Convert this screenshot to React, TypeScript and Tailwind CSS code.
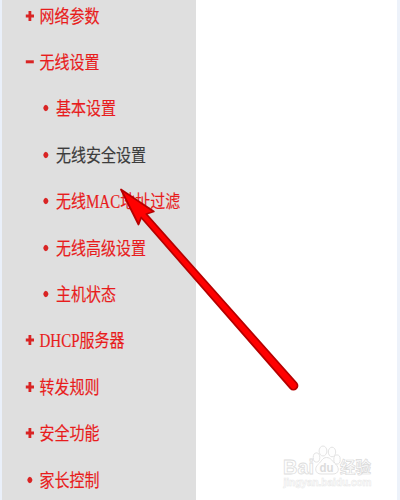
interface MenuItem {
  label: string;
  icon: 'plus' | 'minus' | 'dot';
  child?: boolean;
  active?: boolean;
}

const menuItems: MenuItem[] = [
  { label: '网络参数', icon: 'plus' },
  { label: '无线设置', icon: 'minus' },
  { label: '基本设置', icon: 'dot', child: true },
  { label: '无线安全设置', icon: 'dot', child: true, active: true },
  { label: '无线MAC地址过滤', icon: 'dot', child: true },
  { label: '无线高级设置', icon: 'dot', child: true },
  { label: '主机状态', icon: 'dot', child: true },
  { label: 'DHCP服务器', icon: 'plus' },
  { label: '转发规则', icon: 'plus' },
  { label: '安全功能', icon: 'plus' },
  { label: '家长控制', icon: 'dot' },
];

function Marker({ icon }: { icon: MenuItem['icon'] }) {
  return (
    <svg viewBox="0 0 10 12" className="-mt-0.5 h-3 w-2.5 shrink-0 fill-[#d92424]">
      {icon === 'plus' && <path d="M3.5 1h2.800v3.500H9v3H6.300V11H3.500V7.500H.8v-3h2.700z" />}
      {icon === 'minus' && <path d="M.8 4.300h8v3h-8z" />}
      {icon === 'dot' && <path d="M4.800 2.700 6.500 3.800 7.500 6 6.500 8.300 4.800 9.300 3.100 8.300 2.200 6 3.100 3.800z" />}
    </svg>
  );
}

function Arrow() {
  return (
    <svg viewBox="0 0 400 500" className="pointer-events-none absolute inset-0 h-[500px] w-[400px]">
      <path
        d="M121 189.500 153.800 211.500 146.300 214 296.500 383A4 4 0 0 1 290.500 388.300L141.200 217.500 138.500 224.500Z"
        fill="#ff0000"
        stroke="#b60000"
        strokeWidth="1.8"
        strokeLinejoin="round"
      />
    </svg>
  );
}

function Watermark() {
  return (
    <svg viewBox="0 0 100 50" className="absolute top-[442px] left-[280px] h-[50px] w-[100px]">
      <g fill="#fefefe" stroke="#e0e0e0" strokeWidth="0.9">
        <ellipse cx="43" cy="9" rx="3.900" ry="5" />
        <ellipse cx="52" cy="10" rx="3.700" ry="4.800" />
        <ellipse cx="36.500" cy="15.500" rx="3.300" ry="4.600" />
        <ellipse cx="57" cy="17.500" rx="3.200" ry="4.600" />
        <path d="M46.500 15.500c-4 0-5 4-8 6.500-4.500 3.500-3.500 10 2.500 10h12c6 0 7-6 2.500-10-3-2.500-4.500-6.500-9-6.500z" />
      </g>
      <g strokeWidth="0.8" className="font-['Liberation_Sans'] font-bold">
        <text x="3" y="32" fontSize="21" textLength="31" lengthAdjust="spacingAndGlyphs" fill="#fefefe" stroke="#dddddd">
          Bai
        </text>
        <text x="39.500" y="29.500" fontSize="12" textLength="14" lengthAdjust="spacingAndGlyphs" fill="#dcdcdc">
          du
        </text>
      </g>
      <text x="60" y="31" fontSize="15.500" textLength="31" fill="#fefefe" stroke="#dadada" strokeWidth="0.7" className="font-['Noto_Sans_CJK_SC',sans-serif] font-bold">
        经验
      </text>
      <text x="3.500" y="43.500" fontSize="10" textLength="88" lengthAdjust="spacingAndGlyphs" fill="#fefefe" stroke="#e8e8e8" strokeWidth="0.5" className="font-['Liberation_Sans'] font-bold">
        jingyan.baidu.com
      </text>
    </svg>
  );
}

export default function App() {
  return (
    <div className="relative flex h-[500px] w-[400px] overflow-hidden bg-white">
      <aside className="h-full w-[196px] border-l-2 border-[#eaf0fa] bg-[#dfdfdf]">
        <nav className="-mt-[6.5px] flex flex-col">
          {menuItems.map((item) => (
            <a
              key={item.label}
              className={`flex h-[46.4px] shrink-0 items-center gap-[5px] whitespace-nowrap ${item.child ? 'pl-[39px]' : 'pl-[22.5px]'}`}
            >
              <Marker icon={item.icon} />
              <span
                className={`scale-y-[1.2] font-['Liberation_Serif','Noto_Sans_CJK_SC',sans-serif] text-[15px] leading-5 [-webkit-text-stroke:0.15px] ${item.active ? 'text-[#3c3c3c]' : 'text-[#e81c1c]'}`}
              >
                {item.label}
              </span>
            </a>
          ))}
        </nav>
      </aside>
      <main className="h-full flex-1 border-r-3 border-[#edf2fa] bg-white" />
      <Arrow />
      <Watermark />
    </div>
  );
}
